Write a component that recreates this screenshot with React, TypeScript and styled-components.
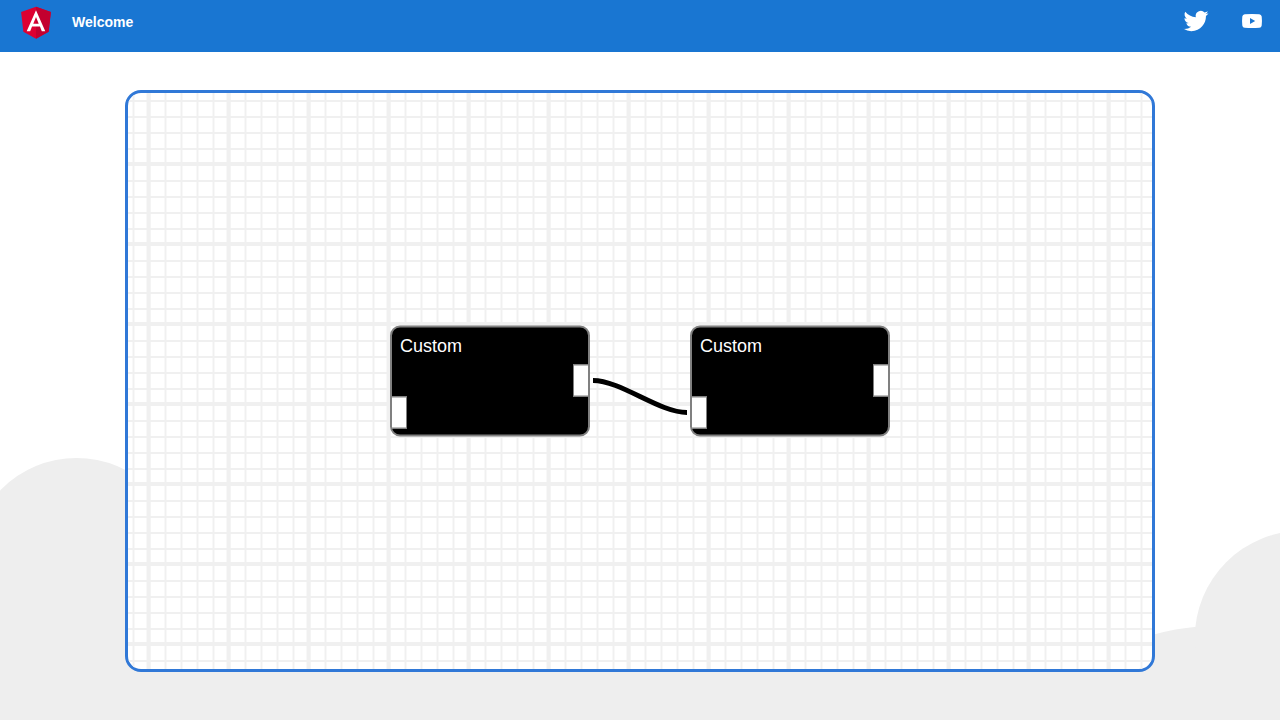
import React from "react";
import styled, { createGlobalStyle } from "styled-components";

const GlobalStyle = createGlobalStyle`
  body {
    margin: 0;
    overflow: hidden;
    font-family: "Liberation Sans", Arial, sans-serif;
  }
`;

const Page = styled.div`
  position: relative;
  height: 720px;
  display: flex;
  flex-direction: column;
  background: #fff;
`;

const Toolbar = styled.header`
  box-sizing: border-box;
  height: 52px;
  padding: 0 16px 8px;
  display: flex;
  align-items: center;
  background: #1976d2;
  color: #fff;
  font-size: 14px;
  font-weight: 600;
`;

const Logo = styled.svg`
  width: 40px;
  height: 40px;
  margin: 0 16px 0 0;
`;

const Spacer = styled.div`
  flex: 1;
`;

const SocialIcon = styled.svg<{ $size: number; $gap?: number }>`
  width: ${(p) => p.$size}px;
  height: ${(p) => p.$size}px;
  margin: 0 ${(p) => p.$gap ?? 0}px 2px 0;
  fill: #fff;
`;

const Clouds = styled.svg`
  position: absolute;
  left: 0;
  bottom: 0;
  width: 1280px;
  height: 270px;
  fill: #eee;
`;

const Main = styled.main`
  flex: 1;
  display: flex;
  justify-content: center;
  align-items: flex-start;
  padding-top: 38px;
`;

const Canvas = styled.section`
  position: relative;
  box-sizing: border-box;
  width: 1030px;
  height: 582px;
  border: 3px solid #3078d7;
  border-radius: 16px;
  overflow: hidden;
  background: #fff;
`;

const Surface = styled.svg`
  position: absolute;
  inset: 0;
  width: 100%;
  height: 100%;
`;

const NodeBox = styled.article<{ $x: number; $y: number }>`
  position: absolute;
  left: 0;
  top: 0;
  transform: translate(${(p) => p.$x}px, ${(p) => p.$y}px);
  box-sizing: border-box;
  width: 200px;
  height: 111px;
  border: 2px solid gray;
  border-radius: 10px;
  background: #000;
  color: #fff;
  display: flex;
  flex-direction: column;
`;

const NodeTitle = styled.div`
  height: 21px;
  padding: 8px;
  font-size: 18px;
  line-height: 21px;
`;

const Port = styled.div<{ $side: "left" | "right" }>`
  box-sizing: border-box;
  width: 15px;
  height: 32px;
  align-self: ${(p) => (p.$side === "left" ? "flex-start" : "flex-end")};
  border: 1px solid gray;
  border-${(p) => p.$side}: 0;
  background: #fff;
`;

const NODES = [
  { x: 262, y: 232.5 },
  { x: 562, y: 232.5 },
];

function Grid() {
  return (
    <Surface>
      <defs>
        <pattern id="minor" x="4.5" y="71" width="16" height="16" patternUnits="userSpaceOnUse">
          <path d="M0 0H16V2H2V16H0Z" fill="#f0f0f0" />
        </pattern>
        <pattern id="major" x="18.5" y="69" width="80" height="80" patternUnits="userSpaceOnUse">
          <path d="M0 0H80V4H4V80H0Z" fill="#f0f0f0" />
        </pattern>
      </defs>
      <rect width="100%" height="100%" fill="url(#minor)" />
      <rect width="100%" height="100%" fill="url(#major)" />
      <path d="M465 287.5C493 287.5 531 319.5 559 319.5" fill="none" stroke="#000" strokeWidth="5" />
    </Surface>
  );
}

export default function App() {
  return (
    <Page>
      <GlobalStyle />
      <Clouds viewBox="0 450 1280 270">
        <circle cx="76.5" cy="564" r="106" />
        <path d="M0 560H130V660H1100L1155 634.3Q1175 628.5 1197 626.7V720H0Z" />
        <circle cx="1302" cy="638" r="107.2" />
        <path d="M1196 626.7H1280V720H1196Z" />
      </Clouds>
      <Toolbar>
        <Logo viewBox="0 0 250 250">
          <path fill="#dd0031" d="M125 30 31.9 63.2l14.2 123.1L125 230l78.9-43.7 14.2-123.1z" />
          <path fill="#c3002f" d="M125 30v200l78.9-43.7 14.2-123.1z" />
          <path
            fill="#fff"
            d="M125 52.1 66.8 182.6h21.7l11.7-29.2h49.4l11.7 29.2H183L125 52.1zm17 83.3h-34l17-40.9z"
          />
        </Logo>
        <span>Welcome</span>
        <Spacer />
        <SocialIcon $size={40} $gap={24} viewBox="0 0 400 400">
          <path d="M153.62,301.59c94.34,0,145.94-78.16,145.94-145.94,0-2.22,0-4.43-.15-6.63A104.36,104.36,0,0,0,325,122.47a102.38,102.38,0,0,1-29.46,8.07,51.47,51.47,0,0,0,22.55-28.37,102.79,102.79,0,0,1-32.57,12.45,51.34,51.34,0,0,0-87.41,46.78A145.62,145.62,0,0,1,92.4,107.81a51.33,51.33,0,0,0,15.88,68.47A50.91,50.91,0,0,1,85,169.86c0,.21,0,.43,0,.65a51.31,51.31,0,0,0,41.15,50.28,51.21,51.21,0,0,1-23.16.88,51.35,51.35,0,0,0,47.92,35.62,102.92,102.92,0,0,1-63.7,22A104.41,104.41,0,0,1,75,278.55a145.21,145.21,0,0,0,78.62,23" />
        </SocialIcon>
        <SocialIcon $size={24} viewBox="0 0 24 24">
          <path d="M21.7 7.6Q21.4 5.5 19.3 5.2Q12 4.8 4.7 5.2Q2.6 5.5 2.3 7.6Q1.8 12 2.3 16.4Q2.6 18.5 4.7 18.8Q12 19.2 19.3 18.8Q21.4 18.5 21.7 16.4Q22.2 12 21.7 7.6ZM10 15V9l5.2 3z" />
        </SocialIcon>
      </Toolbar>
      <Main>
        <Canvas>
          <Grid />
          {NODES.map((node) => (
            <NodeBox key={node.x} $x={node.x} $y={node.y}>
              <NodeTitle>Custom</NodeTitle>
              <Port $side="right" />
              <Port $side="left" />
            </NodeBox>
          ))}
        </Canvas>
      </Main>
    </Page>
  );
}
